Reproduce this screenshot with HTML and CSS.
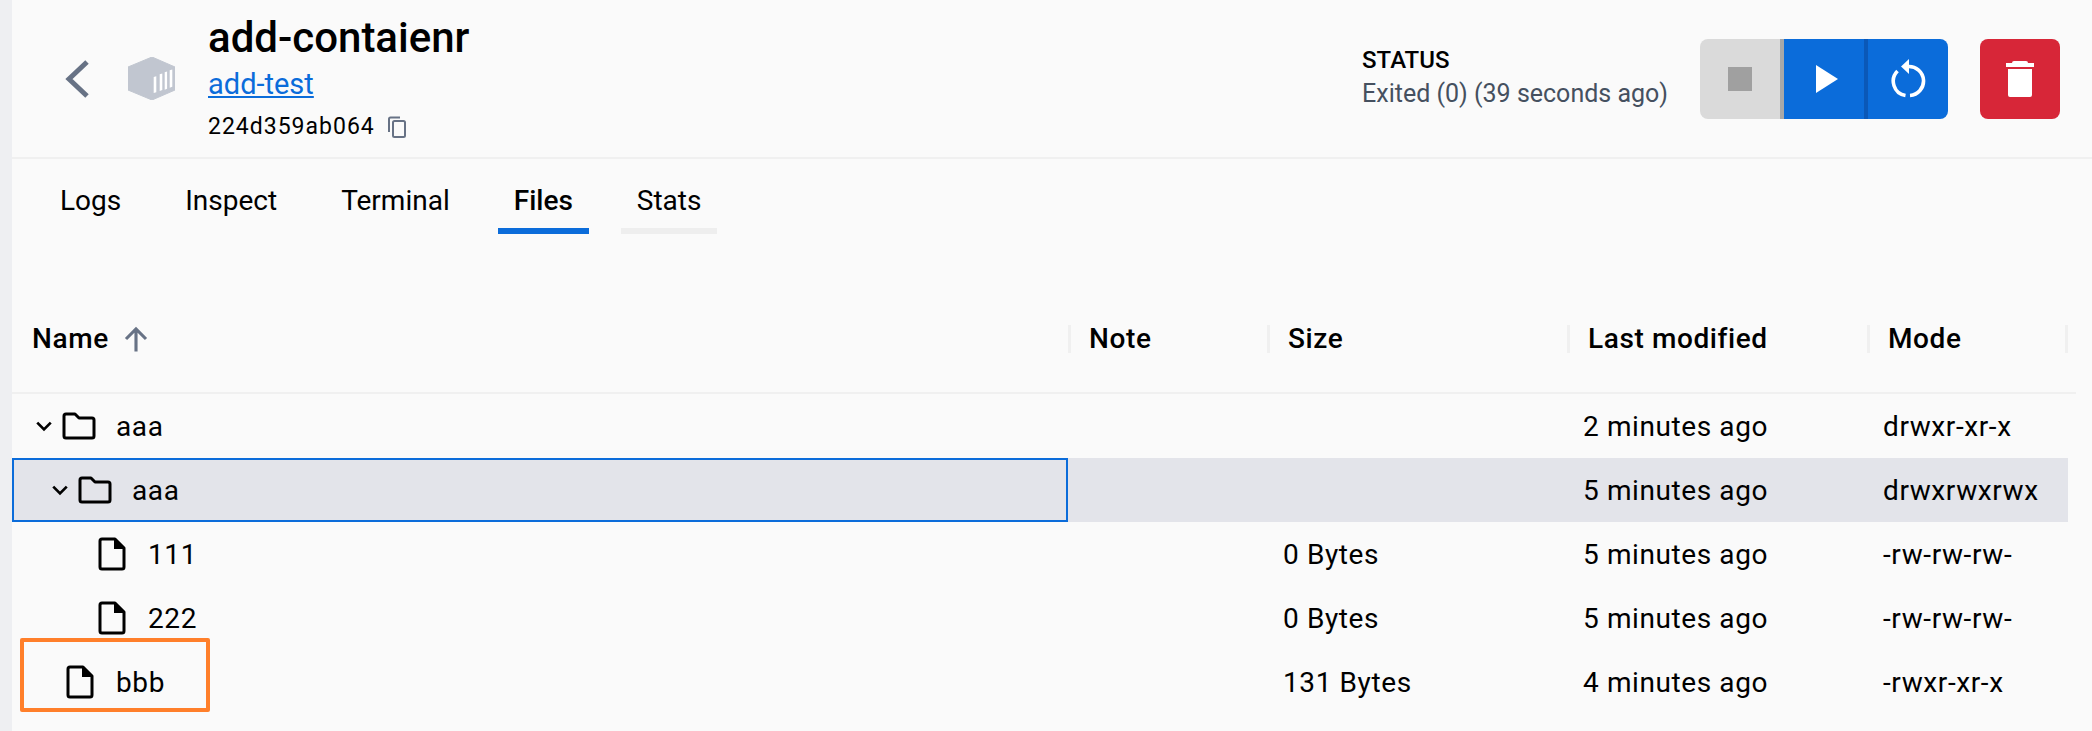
FILE: index.html
```html
<!DOCTYPE html>
<html lang="en">
<head>
  <meta charset="UTF-8" />
  <title>add-contaienr</title>
  <link rel="stylesheet" href="styles.css">
</head>
<body>
  <div class="page">
    <!-- HEADER -->
    <header class="head">
      <svg class="back" viewBox="0 0 26 40"><path d="M23 3 5 20l18 17" fill="none" stroke="#677285" stroke-width="5"/></svg>
      <svg class="cube" viewBox="0 0 47 43">
        <path d="M24 0 47 10v23L24 43 0 33V10z" fill="#c1c6d0" stroke="#c1c6d0" stroke-width="1" stroke-linejoin="round"/>
        <path d="M25.700 36V20l2.600-.7v16zM31.700 34V17.300l2.600-.7v16.500zM36.700 32.700V15.300l2.400-.7v17.200zM41.700 30.700V13.300l2.600-.7v17.200z" fill="#fff"/>
      </svg>
      <div class="ident">
        <h1>add-contaienr</h1>
        <a class="link" href="#">add-test</a>
        <div class="hash">
          <span>224d359ab064</span>
          <svg class="copy" viewBox="0 0 20 22"><path d="M13 1.500H3.500a1.500 1.500 0 0 0-1.500 1.500V16" fill="none" stroke="#677285" stroke-width="2"/><rect x="6" y="5" width="12" height="16" rx="1.500" fill="none" stroke="#677285" stroke-width="2"/></svg>
        </div>
      </div>
      <div class="status">
        <div class="status-label">STATUS</div>
        <div class="status-text">Exited (0) (39 seconds ago)</div>
      </div>
      <div class="btn-group">
        <button class="btn btn-stop"><span class="stop-icon"></span></button>
        <button class="btn btn-blue">
          <svg class="ico-play" viewBox="0 0 22 28" width="22" height="28"><path d="M0 0v28l22-14z" fill="#fff"/></svg>
        </button>
        <button class="btn btn-blue btn-last">
          <svg viewBox="0 0 36 40" width="36" height="40"><path d="M18 7.500a14.500 14.500 0 0 1 2 29M15.500 36.500A14.500 14.500 0 0 1 7.500 12" fill="none" stroke="#fff" stroke-width="3.600"/><path d="M19 0v15l-8-7.500z" fill="#fff"/></svg>
        </button>
      </div>
      <button class="btn btn-delete">
        <svg viewBox="0 0 28 36" width="28" height="36"><path d="M6 2a2 2 0 0 1 2-2h12a2 2 0 0 1 2 2h6v4H0V2zM2 8h24v26a2 2 0 0 1-2 2H4a2 2 0 0 1-2-2z" fill="#fff"/></svg>
      </button>
    </header>

    <!-- TABS -->
    <nav class="tabs">
      <a class="tab">Logs</a>
      <a class="tab">Inspect</a>
      <a class="tab">Terminal</a>
      <a class="tab tab-active">Files</a>
      <a class="tab tab-last">Stats</a>
    </nav>

    <!-- FILES -->
    <div class="table">
      <div class="row row-head">
        <div class="cell cell-name">Name
          <svg class="sort" viewBox="0 0 24 24"><path d="M12 22V4M4 12l8-8 8 8" fill="none" stroke="#677285" stroke-width="2.500"/></svg>
        </div>
        <div class="cell sep">Note</div>
        <div class="cell sep">Size</div>
        <div class="cell sep">Last modified</div>
        <div class="cell sep sep-end">Mode</div>
      </div>

      <div class="row">
        <div class="cell cell-name lvl-0">
          <svg class="chev" viewBox="0 0 16 10"><path d="M2 2l6 6 6-6" fill="none" stroke="#000" stroke-width="2.400"/></svg>
          <svg class="ico-folder" viewBox="0 0 34 28"><path d="M2 4a2 2 0 0 1 2-2h9l4 4h13a2 2 0 0 1 2 2v16a2 2 0 0 1-2 2H4a2 2 0 0 1-2-2z" fill="none" stroke="#000" stroke-width="3" stroke-linejoin="round"/></svg>
          <span class="fname">aaa</span>
        </div>
        <div class="cell"></div>
        <div class="cell"></div>
        <div class="cell">2 minutes ago</div>
        <div class="cell">drwxr-xr-x</div>
      </div>

      <div class="row row-selected">
        <div class="cell cell-name lvl-1 cell-focus">
          <svg class="chev" viewBox="0 0 16 10"><path d="M2 2l6 6 6-6" fill="none" stroke="#000" stroke-width="2.400"/></svg>
          <svg class="ico-folder" viewBox="0 0 34 28"><path d="M2 4a2 2 0 0 1 2-2h9l4 4h13a2 2 0 0 1 2 2v16a2 2 0 0 1-2 2H4a2 2 0 0 1-2-2z" fill="none" stroke="#000" stroke-width="3" stroke-linejoin="round"/></svg>
          <span class="fname">aaa</span>
        </div>
        <div class="cell"></div>
        <div class="cell"></div>
        <div class="cell">5 minutes ago</div>
        <div class="cell">drwxrwxrwx</div>
      </div>

      <div class="row">
        <div class="cell cell-name lvl-2">
          <svg class="ico-file" viewBox="0 0 28 34"><path d="M2 4a2 2 0 0 1 2-2h13l9 9v19a2 2 0 0 1-2 2H4a2 2 0 0 1-2-2z" fill="none" stroke="#000" stroke-width="3" stroke-linejoin="round"/><path d="M16 2v10h10z"/></svg>
          <span class="fname">111</span>
        </div>
        <div class="cell"></div>
        <div class="cell">0 Bytes</div>
        <div class="cell">5 minutes ago</div>
        <div class="cell">-rw-rw-rw-</div>
      </div>

      <div class="row">
        <div class="cell cell-name lvl-2">
          <svg class="ico-file" viewBox="0 0 28 34"><path d="M2 4a2 2 0 0 1 2-2h13l9 9v19a2 2 0 0 1-2 2H4a2 2 0 0 1-2-2z" fill="none" stroke="#000" stroke-width="3" stroke-linejoin="round"/><path d="M16 2v10h10z"/></svg>
          <span class="fname">222</span>
        </div>
        <div class="cell"></div>
        <div class="cell">0 Bytes</div>
        <div class="cell">5 minutes ago</div>
        <div class="cell">-rw-rw-rw-</div>
      </div>

      <div class="row">
        <div class="cell cell-name lvl-3">
          <svg class="ico-file" viewBox="0 0 28 34"><path d="M2 4a2 2 0 0 1 2-2h13l9 9v19a2 2 0 0 1-2 2H4a2 2 0 0 1-2-2z" fill="none" stroke="#000" stroke-width="3" stroke-linejoin="round"/><path d="M16 2v10h10z"/></svg>
          <span class="fname">bbb</span>
        </div>
        <div class="cell"></div>
        <div class="cell">131 Bytes</div>
        <div class="cell">4 minutes ago</div>
        <div class="cell">-rwxr-xr-x</div>
      </div>
    </div>

    <!-- annotation drawn on top of the screenshot -->
    <div class="highlight"></div>
  </div>
</body>
</html>
```

FILE: styles.css
```css
html, body {
  margin: 0;
  padding: 0;
  height: 731px;
  overflow: hidden;
}
body {
  background: #eeeff2;
  font-family: Roboto, "Liberation Sans", sans-serif;
  color: #000;
}
.page {
  position: relative;
  margin-left: 12px;
  height: 731px;
  background: #fafafa;
}

.head {
  display: flex;
  align-items: center;
  height: 157px;
  border-bottom: 2px solid #f0f0f0;
  padding-left: 52px;
  padding-right: 32px;
}
.back {
  width: 26px;
  height: 40px;
  margin-right: 38px;
}
.cube {
  width: 47px;
  height: 43px;
  margin-right: 33px;
}
.ident {
  flex: 1;
  padding-top: 2px;
}
.ident h1 {
  margin: 0;
  font-size: 42px;
  font-weight: 500;
  line-height: 46px;
  margin-top: -4px;
}
.link {
  display: block;
  color: #0b6cda;
  font-size: 29px;
  line-height: 36px;
  margin-top: 5px;
}
.hash {
  display: flex;
  align-items: center;
  gap: 12px;
  font-size: 23px;
  letter-spacing: 1px;
  line-height: 28px;
  margin-top: 11px;
}
.copy {
  width: 20px;
  height: 22px;
}

.status {
  margin-right: 32px;
}
.status-label {
  font-size: 24px;
  font-weight: 500;
  line-height: 30px;
}
.status-text {
  font-size: 25px;
  color: #45505f;
  line-height: 36px;
  margin-top: 1px;
}

.btn-group {
  display: flex;
  margin-right: 32px;
}
.btn {
  display: flex;
  align-items: center;
  justify-content: center;
  width: 80px;
  height: 80px;
  border: none;
  padding: 0;
}
.btn-stop {
  width: 84px;
  background: #dadada;
  border-right: 4px solid #a8a8a8;
  border-radius: 8px 0 0 8px;
}
.stop-icon {
  width: 24px;
  height: 24px;
  background: #a0a0a0;
}
.btn-blue {
  width: 84px;
  background: #0b6cda;
  border-right: 4px solid #0a58b8;
}
.btn-last {
  width: 80px;
  border-right: none;
  border-radius: 0 8px 8px 0;
}
.btn-delete {
  background: #d72638;
  border-radius: 8px;
}
.ico-play {
  margin-left: 6px;
}

.tabs {
  display: flex;
  height: 75px;
  padding-left: 32px;
  margin-bottom: 39px;
}
.tab {
  display: flex;
  align-items: center;
  box-sizing: border-box;
  height: 75px;
  padding: 14px 16px 0;
  margin-right: 32px;
  font-size: 28px;
  color: #000;
  border-bottom: 6px solid transparent;
}
.tab-active {
  font-weight: 500;
  border-bottom-color: #0b6cda;
}
.tab-last {
  border-bottom-color: #eeeeee;
}

.table {
  margin-right: 24px;
  font-size: 28px;
  letter-spacing: 0.600px;
}
.row {
  display: grid;
  grid-template-columns: 1056px 199px 300px 300px 1fr;
  height: 64px;
  align-items: center;
}
.row-head {
  height: 119px;
  border-bottom: 2px solid #f0f0f0;
  margin-right: -8px;
  align-items: start;
  font-weight: 500;
}
.row-head .cell {
  height: 28px;
  line-height: 28px;
  margin-top: 52px;
  padding-left: 18px;
}
.row-head .cell-name {
  padding-left: 20px;
  display: flex;
  align-items: center;
  gap: 12px;
}
.cell {
  padding-left: 16px;
  white-space: nowrap;
}
.cell.sep {
  border-left: 3px solid #f0f0f0;
}
.sep-end {
  border-right: 3px solid #f0f0f0;
  margin-right: 8px;
}
.sort {
  width: 30px;
  height: 30px;
}
.cell-name {
  display: flex;
  align-items: center;
  box-sizing: border-box;
  height: 64px;
  padding-left: 0;
}
.lvl-0 { padding-left: 23px; }
.lvl-1 { padding-left: 39px; }
.lvl-2 { padding-left: 86px; }
.lvl-3 { padding-left: 54px; }
.chev {
  width: 18px;
  height: 12px;
  margin-right: 9px;
}
.ico-folder {
  width: 34px;
  height: 28px;
  margin-right: 20px;
}
.ico-file {
  width: 28px;
  height: 34px;
  margin-right: 22px;
}
.row-selected {
  background: #e3e4ea;
}
.cell-focus {
  border: 2px solid #0b6cda;
  padding-left: 37px;
}

.highlight {
  position: absolute;
  left: 8px;
  top: 638px;
  width: 182px;
  height: 66px;
  border: 4px solid #ff7f2a;
  border-radius: 2px;
}
```
